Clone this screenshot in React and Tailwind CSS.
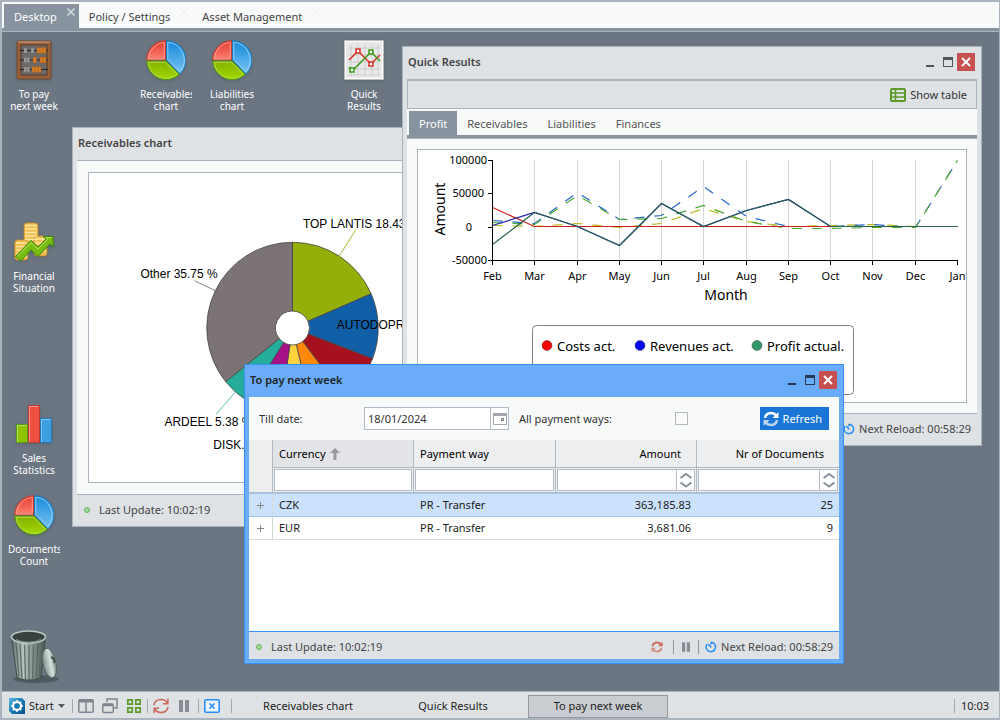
import React, { useState } from 'react';

const PIE_SLICES = [
  { start: 0, end: 66.5, color: '#94ae0a' },
  { start: 66.5, end: 111, color: '#115fa6' },
  { start: 111, end: 143, color: '#a61120' },
  { start: 143, end: 167, color: '#ff8809' },
  { start: 167, end: 188.5, color: '#ffd13e' },
  { start: 188.5, end: 211.7, color: '#a61187' },
  { start: 211.7, end: 231.3, color: '#24ad9a' },
  { start: 231.3, end: 360, color: '#7c7474' },
];

const MONTHS = [
  { name: 'Feb', x: 492.5 },
  { name: 'Mar', x: 534.5 },
  { name: 'Apr', x: 577.5 },
  { name: 'May', x: 619.5 },
  { name: 'Jun', x: 661.5 },
  { name: 'Jul', x: 703.5 },
  { name: 'Aug', x: 746.5 },
  { name: 'Sep', x: 788.5 },
  { name: 'Oct', x: 830.5 },
  { name: 'Nov', x: 872.5 },
  { name: 'Dec', x: 915.5 },
  { name: 'Jan', x: 957.5 },
];

const AMOUNTS = [
  { label: '100000', y: 160.5 },
  { label: '50000', y: 193.5 },
  { label: '0', y: 227.5 },
  { label: '-50000', y: 260.5 },
];

const SERIES = [
  { color: '#b9b71c', dashed: true, values: [225, 226, 223, 227, 223, 208, 221, 226, 225, 224, 226, 226] },
  { color: '#2a66c8', dashed: true, values: [220, 223, 192, 219, 215, 186, 216, 226, 226, 224, 227, 160] },
  { color: '#4aa832', dashed: true, values: [222, 224, 195, 219, 218, 205, 221, 228, 228, 227, 227, 160] },
  { color: '#d02020', dashed: false, values: [207, 226, 226, 226, 226, 226, 226, 226, 226, 226, 226, 226] },
  { color: '#2222c0', dashed: false, values: [225, 212, 226, 245, 203, 226, 210, 199, 226, 226, 226, 226] },
  { color: '#2b6350', dashed: false, values: [244, 212, 226, 245, 203, 226, 210, 199, 226, 226, 226, 226] },
];

const LEGEND = [
  { label: 'Costs act.', color: '#ff0000', x: 547 },
  { label: 'Revenues act.', color: '#0000ff', x: 640 },
  { label: 'Profit actual.', color: '#339966', x: 757 },
];

const PAYMENTS = [
  { currency: 'CZK', way: 'PR - Transfer', amount: '363,185.83', documents: 25 },
  { currency: 'EUR', way: 'PR - Transfer', amount: '3,681.06', documents: 9 },
];

function slicePath({ start, end }) {
  const point = (radius, angle) => {
    const rad = (angle * Math.PI) / 180;
    return `${292.5 + radius * Math.sin(rad)} ${328.5 - radius * Math.cos(rad)}`;
  };
  return `M${point(17, start)} L${point(86, start)} A86 86 0 0 1 ${point(86, end)} L${point(17, end)} A17 17 0 0 0 ${point(17, start)}Z`;
}

/* ---------- icons ---------- */

function RefreshIcon({ className }) {
  return (
    <svg className={className} viewBox="0 0 16 16" fill="none" stroke="currentColor" strokeWidth="2.500">
      <path d="M2 7C2.600 3.800 5 2 8 2c2.300 0 4 .9 5.300 2.700" />
      <path d="M15.500 1v6H9.500z" fill="currentColor" stroke="none" />
      <g className="opacity-70">
        <path d="M14 9c-.6 3.200-3 5-6 5-2.300 0-4-.9-5.300-2.700" />
        <path d="M.5 15V9h6z" fill="currentColor" stroke="none" />
      </g>
    </svg>
  );
}

function ThinRefreshIcon() {
  return (
    <svg className="h-4 w-4" viewBox="0 0 16 16" fill="none" stroke="#cd6a5c" strokeWidth="1.500">
      <path d="M1 7C1.600 3.500 4.500 1.500 8 1.500c2.800 0 5 1.300 6.300 3.500M14.900.8v5H10" />
      <path d="M15 9c-.6 3.500-3.500 5.500-7 5.500-2.800 0-5-1.300-6.300-3.500M1.100 15.200v-5H6" />
    </svg>
  );
}

function PauseIcon({ className }) {
  return (
    <svg className={className} viewBox="0 0 10 12" fill="#878d96">
      <path d="M0 0h4v12H0zM6 0h4v12H6z" />
    </svg>
  );
}

function TimerIcon() {
  return (
    <svg className="h-3 w-3" viewBox="0 0 12 12" fill="none" stroke="#2b8ff2" strokeWidth="1.500">
      <path d="M6 1.300a4.700 4.700 0 1 1-3.700 1.600M6 1v2.500M3.500 3.200 6.300 6.600" />
    </svg>
  );
}

function PieIcon() {
  return (
    <svg className="h-10 w-10 drop-shadow" viewBox="0 0 40 40">
      <defs>
        <linearGradient id="pieBlue" x1="0" y1="0" x2="0" y2="1">
          <stop offset="0" stopColor="#1489d8" />
          <stop offset="1" stopColor="#79c4f4" />
        </linearGradient>
        <linearGradient id="pieRed" x1="0" y1="0" x2="0" y2="1">
          <stop offset="0" stopColor="#e03c30" />
          <stop offset="1" stopColor="#ff8070" />
        </linearGradient>
        <linearGradient id="pieGreen" x1="0" y1="0" x2="0" y2="1">
          <stop offset="0" stopColor="#83b000" />
          <stop offset="1" stopColor="#a2d800" />
        </linearGradient>
      </defs>
      <path d="M20.500 20V.700A19.300 19.300 0 0 1 34 34z" fill="url(#pieBlue)" stroke="#1878bd" />
      <path d="M19.500 20V.700A19.300 19.300 0 0 0 .700 20z" fill="url(#pieRed)" stroke="#c53a30" />
      <path d="M.700 21H20l13.300 13.300A19.300 19.300 0 0 1 .700 21z" fill="url(#pieGreen)" stroke="#4f9a0c" />
      <path d="M21.800 19.500V2.200A18 18 0 0 1 33.900 31.700z" fill="none" stroke="#9bd2f7" strokeWidth=".9" />
      <path d="M18.300 18.800V2.200A18 18 0 0 0 2.200 18.800z" fill="none" stroke="#ff9f92" strokeWidth=".9" />
      <path d="M2.200 22.300H19.500l11.900 12A18 18 0 0 1 2.200 22.300z" fill="none" stroke="#b9e052" strokeWidth=".9" />
    </svg>
  );
}

function AbacusIcon() {
  return (
    <svg className="h-10 w-10 drop-shadow" viewBox="0 0 40 40">
      <rect x="3" y="1" width="34" height="38" rx="1" fill="#96603d" stroke="#74482c" />
      <path d="M4 2h32" stroke="#d0a68a" />
      <rect x="7" y="5" width="26" height="30" fill="#6b6a6b" stroke="#5a3823" />
      <path d="M6 10.500h28M6 20h28M6 29.500h28" stroke="#2a2422" strokeWidth="1.200" />
      <g fill="#9a9894">
        <rect x="10" y="8" width="3" height="5" rx="1" />
        <rect x="17" y="8" width="3" height="5" rx="1" />
        <rect x="10" y="17.500" width="2.500" height="5" rx="1" />
        <rect x="13" y="17.500" width="2.500" height="5" rx="1" />
        <rect x="10" y="27" width="2.500" height="5" rx="1" />
        <rect x="13" y="27" width="2.500" height="5" rx="1" />
      </g>
      <g fill="#d9822b" stroke="#9c5312" strokeWidth=".5">
        <rect x="23" y="7.500" width="3" height="6" rx="1" />
        <rect x="26" y="7.500" width="3" height="6" rx="1" />
        <rect x="29" y="7.500" width="3" height="6" rx="1" />
        <rect x="19" y="17" width="3.500" height="6" rx="1" />
        <rect x="26" y="17" width="3" height="6" rx="1" />
        <rect x="29" y="17" width="3" height="6" rx="1" />
        <rect x="18" y="26.500" width="3" height="6" rx="1" />
        <rect x="21" y="26.500" width="3" height="6" rx="1" />
        <rect x="24" y="26.500" width="3" height="6" rx="1" />
      </g>
    </svg>
  );
}

function ResultsIcon() {
  return (
    <svg className="h-10 w-10 drop-shadow" viewBox="0 0 40 40" fill="none">
      <rect x=".5" y=".5" width="39" height="39" fill="#e9e9e9" stroke="#b9babb" />
      <rect x="1.500" y="1.500" width="37" height="37" stroke="#fff" />
      <path d="M4 8h32M4 15h32M4 22h32M4 29h32M4 35h32M7 4v32M14 4v32M21 4v32M28 4v32M34 4v32" stroke="#cdcdcd" />
      <path d="m5 20 9-9 13 13 9-9" stroke="#d9302a" strokeWidth="1.500" />
      <path d="m5 27 3 4 19-19 9 9" stroke="#3f9a1c" strokeWidth="1.500" />
      <g fill="#fff" strokeWidth="1.500">
        <path d="M12 9h4v4h-4zM25 22h4v4h-4z" stroke="#d9302a" />
        <path d="M6 28h4v4H6zM25 10h4v4h-4z" stroke="#3f9a1c" />
      </g>
    </svg>
  );
}

function CoinsIcon() {
  return (
    <svg className="h-10 w-10 drop-shadow" viewBox="0 0 40 40">
      <g fill="#f2bd51" stroke="#c98a2a" strokeWidth=".8">
        <rect x="10" y="1" width="14" height="22" rx="3" />
        <rect x="20" y="14" width="13" height="20" rx="3" />
        <rect x=".8" y="18" width="13" height="20" rx="3" />
      </g>
      <g stroke="#fbe6a0" strokeWidth="1.600">
        <path d="M11 3.500h12M11 7h12M11 10.500h12M11 14h12M11 17.500h12M21 17h11M21 21h11M21 25h11M21 29h11M2 21h11M2 24.500h11M2 28h11M2 31.500h11M2 35h11" />
      </g>
      <path d="m1.500 34.500 15.500-16 7 6.500 8-8-3-2.500h10.200V25l-3.200-3L24 34.500l-7-6.500-10 11z" fill="#78bd13" stroke="#3c8209" />
      <path d="m3.500 34.500 13.500-14 7 6.500 9.500-9.500-1.500-2h6" fill="none" stroke="#b5e254" />
    </svg>
  );
}

function BarsIcon() {
  return (
    <svg className="h-10 w-10 drop-shadow" viewBox="0 0 40 40">
      <rect x="2.500" y="20.500" width="11" height="18" fill="#8ec302" stroke="#559c0c" />
      <rect x="14.500" y="1.500" width="11" height="37" fill="#ee5142" stroke="#bd3a30" />
      <rect x="26.500" y="14.500" width="11" height="24" fill="#3d9fe0" stroke="#1d79b7" />
      <path d="M3.500 38V21.500h9M15.500 38V2.500h9M27.500 38V15.500h9" fill="none" stroke="#fff" strokeOpacity=".4" />
    </svg>
  );
}

function TrashIcon() {
  return (
    <svg className="h-14 w-13" viewBox="0 0 52 56">
      <defs>
        <linearGradient id="can" x1="0" x2="1">
          <stop offset="0" stopColor="#64726e" />
          <stop offset=".35" stopColor="#b5c4bf" />
          <stop offset="1" stopColor="#485450" />
        </linearGradient>
        <linearGradient id="canLid" x1="0" x2="1">
          <stop offset="0" stopColor="#7f918c" />
          <stop offset=".6" stopColor="#d3e0dc" />
          <stop offset="1" stopColor="#78857f" />
        </linearGradient>
      </defs>
      <ellipse cx="27" cy="50" rx="23" ry="4" fill="#343b42" opacity=".5" />
      <path d="M2.500 8h34L32 48c-3 4-21 4-24 0z" fill="url(#can)" stroke="#414c49" />
      <path d="m7 14 3 34M11 15l2 35M15.500 16l1 35M20 16v35M24.500 16l-1 35M29 15l-2 35M33 14l-3 34" stroke="#5b6863" strokeWidth="1.200" />
      <ellipse cx="19.500" cy="8" rx="17" ry="6" fill="#37413f" stroke="#b8c7c2" strokeWidth="1.600" />
      <path d="M7 10c6 4 19 4 25 0" stroke="#77847f" fill="none" />
      <ellipse cx="40.500" cy="34" rx="6.500" ry="15" transform="rotate(-11 40.500 34)" fill="url(#canLid)" stroke="#57635f" />
      <path d="M42 28c3 1 4 4 3 6" fill="none" stroke="#3e4946" strokeWidth="2" />
    </svg>
  );
}

/* ---------- windows ---------- */

function WindowControls() {
  return (
    <div className="flex items-center">
      <button aria-label="Minimize" className="flex h-4.5 w-4.5 items-center justify-center">
        <svg className="h-3 w-3" viewBox="0 0 12 12" fill="currentColor">
          <path d="M2 9h8v2H2z" />
        </svg>
      </button>
      <button aria-label="Maximize" className="flex h-4.5 w-4.5 items-center justify-center">
        <svg className="h-3 w-3" viewBox="0 0 12 12" fill="currentColor" fillRule="evenodd">
          <path d="M1 1h10v10H1zM2 4v6h8V4z" />
        </svg>
      </button>
      <button aria-label="Close" className="flex h-4.5 w-4.5 items-center justify-center bg-[#c75050]">
        <svg className="h-3 w-3" viewBox="0 0 12 12" stroke="#fff" strokeWidth="2">
          <path d="m2 2 8 8M10 2l-8 8" />
        </svg>
      </button>
    </div>
  );
}

function StatusBar({ active }) {
  return (
    <footer
      className={`flex h-7 shrink-0 items-center border-t bg-[#dfe2e5] px-1.5 pt-0.5 text-[#444] ${
        active ? 'border-[#3892f3]' : 'border-[#a9b4be]'
      }`}
    >
      <span className="mx-px h-1.5 w-1.5 rounded-full border border-[#5fb257] bg-[#a5dd9c]" />
      <span className="ml-2">Last Update: 10:02:19</span>
      <div className="ml-auto flex items-center">
        <button aria-label="Reload" className="mr-2.5">
          <RefreshIcon className="h-3 w-3 text-[#cd6a5c]" />
        </button>
        <span className="mr-2 h-3.5 w-px bg-[#8e99a4]" />
        <button aria-label="Pause" className="mr-2">
          <PauseIcon className="h-2.5 w-2" />
        </button>
        <span className="mr-1.5 h-3.5 w-px bg-[#8e99a4]" />
        <TimerIcon />
        <span className="ml-1">Next Reload: 00:58:29</span>
      </div>
    </footer>
  );
}

function DesktopWindow({ title, active, className, children }) {
  return (
    <section
      className={`absolute flex flex-col border px-1 pb-1 ${
        active ? 'border-[#3892f3] bg-[#6aacf8]' : 'border-[#a9b4be] bg-[#dfe2e5]'
      } ${className}`}
    >
      <header className={`flex h-8 shrink-0 items-center justify-between pb-0.5 pl-px pr-0.5 ${active ? 'text-[#263c56]' : 'text-[#555]'}`}>
        <h2 className={`font-semibold ${active ? 'text-[#222]' : 'text-[#444]'}`}>{title}</h2>
        <WindowControls />
      </header>
      {children}
      <StatusBar active={active} />
    </section>
  );
}

function ReceivablesWindow() {
  return (
    <DesktopWindow title="Receivables chart" className="left-[70px] top-[95px] h-[400px] w-[440px]">
      <div className="min-h-0 flex-1 border-t border-[#a9b4be] bg-[#f8faf9] p-[11px]">
        <div className="h-full border border-[#a9b4be] bg-white">
          <svg className="h-full w-full" viewBox="89 173 406 310" fontFamily="'Liberation Sans', sans-serif" fontSize="12">
            {PIE_SLICES.map((slice) => (
              <path key={slice.color} d={slicePath(slice)} fill={slice.color} stroke="#444" strokeOpacity=".8" />
            ))}
            <path d="m356 230-17 27" stroke="#a4bb30" />
            <path d="m194 281 21 10" stroke="#8c8585" />
            <path d="m216 415 19-22" stroke="#4fbfaf" />
            <text x="303" y="228">TOP LANTIS 18.43 %</text>
            <text x="337" y="330">AUTODOPR</text>
            <text x="140" y="278">Other 35.75 %</text>
            <text x="164" y="427">ARDEEL 5.38 %</text>
            <text x="213" y="450">DISK...</text>
          </svg>
        </div>
      </div>
    </DesktopWindow>
  );
}

function ProfitChart() {
  return (
    <svg className="h-full w-full" viewBox="418 150 548 252" fill="none">
      {MONTHS.slice(1, -1).map((month) => (
        <path key={month.name} d={`M${month.x} 160V260`} stroke="#d8d8d8" />
      ))}
      {SERIES.map((line) => (
        <polyline
          key={line.color}
          points={line.values.map((y, i) => `${MONTHS[i].x},${y + 0.5}`).join(' ')}
          stroke={line.color}
          strokeWidth="1.200"
          strokeDasharray={line.dashed ? '10 10' : undefined}
        />
      ))}
      <path d="M492.500 160V260.500H958" stroke="#000" />
      <g fill="#000" fontSize="11">
        {AMOUNTS.map((amount) => (
          <g key={amount.label}>
            <path d={`M488 ${amount.y}h4`} stroke="#000" />
            <text x={amount.label === '0' ? 472 : amount.label === '50000' ? 484 : 487} y={amount.y + 3.5} textAnchor="end">
              {amount.label}
            </text>
          </g>
        ))}
        {MONTHS.map((month) => (
          <g key={month.name}>
            <path d={`M${month.x} 260v5`} stroke="#000" />
            <text x={month.x} y="280" textAnchor="middle">{month.name}</text>
          </g>
        ))}
      </g>
      <g fill="#000" fontSize="14">
        <text x="726" y="300" textAnchor="middle">Month</text>
        <text transform="translate(445 209) rotate(-90)" textAnchor="middle">Amount</text>
      </g>
      <rect x="532.500" y="325.500" width="321" height="69" rx="4" stroke="#808080" />
      <g fontSize="13">
        {LEGEND.map((item) => (
          <g key={item.label}>
            <circle cx={item.x} cy="345.500" r="5" fill={item.color} stroke="#444" strokeWidth=".5" />
            <text x={item.x + 10} y="351" fill="#000">{item.label}</text>
          </g>
        ))}
      </g>
    </svg>
  );
}

function QuickResultsWindow() {
  return (
    <DesktopWindow title="Quick Results" className="left-[400px] top-[14px] h-[400px] w-[580px]">
      <div className="flex h-[30px] shrink-0 items-center justify-end border border-t-2 border-[#a9b4be] pr-[9px]">
        <button className="flex items-center gap-1 text-[#333]">
          <svg className="h-4 w-4" viewBox="0 0 16 16" fill="none" stroke="#5e9a2b" strokeWidth="2">
            <rect x="1" y="2" width="14" height="12" rx="1" />
            <path d="M1 6h14M1 10h14M5.500 2v12" strokeWidth="1.600" />
          </svg>
          Show table
        </button>
      </div>
      <nav className="flex shrink-0 border-b-3 border-[#87939f] bg-[#f8faf9] px-0.5 pt-0.5 text-[#555]">
        <button className="h-6 bg-[#87939f] px-2.5 pt-0.5 text-white">Profit</button>
        <button className="h-6 px-2.5 pt-0.5">Receivables</button>
        <button className="h-6 px-2.5 pt-0.5">Liabilities</button>
        <button className="h-6 px-2.5 pt-0.5">Finances</button>
      </nav>
      <div className="min-h-0 flex-1 border-t border-[#a9b4be] bg-[#f8faf9] p-2.5">
        <div className="h-full border border-[#a9b4be] bg-white">
          <ProfitChart />
        </div>
      </div>
    </DesktopWindow>
  );
}

function FilterCell({ label, numeric }) {
  return (
    <th className="border-l border-[#b3b9c1] p-px">
      <div className="flex h-[22px] border border-[#b3b9c8] bg-white">
        <input aria-label={label} className="h-full w-full min-w-0 px-1 font-normal outline-none" />
        {numeric && (
          <button aria-label={`Step ${label}`} className="flex h-full w-4.5 shrink-0 items-center justify-center border-l border-[#b3b9c8]">
            <svg className="h-4 w-3.5" viewBox="0 0 14 16" fill="none" stroke="#87909a" strokeWidth="2">
              <path d="m1.500 6 5.500-4 5.500 4M1.500 10.500l5.500 4 5.500-4" />
            </svg>
          </button>
        )}
      </div>
    </th>
  );
}

function ToPayWindow() {
  const [date, setDate] = useState('18/01/2024');

  return (
    <DesktopWindow title="To pay next week" active className="left-[242px] top-[332px] h-[300px] w-[600px]">
      <form className="flex h-[43px] shrink-0 items-center bg-[#f8faf9] px-2.5 text-[#333]" onSubmit={(e) => e.preventDefault()}>
        <label htmlFor="tillDate" className="w-[105px]">Till date:</label>
        <div className="flex h-[23px] w-[145px] border border-[#b3b9c8] bg-white">
          <input
            id="tillDate"
            value={date}
            onChange={(e) => setDate(e.target.value)}
            className="w-full min-w-0 px-[3px] outline-none"
          />
          <button type="button" aria-label="Pick date" className="flex w-[18px] shrink-0 items-center justify-center border-l border-[#b3b9c8]">
            <svg className="h-3 w-3.5" viewBox="0 0 14 12" fill="none" stroke="#a2a5aa">
              <path d="M.5.500h13v11H.5z" />
              <path d="M0 1.500h14" strokeWidth="3" />
              <path d="M8.500 5.500h2v2h-2z" stroke="#67707a" />
            </svg>
          </button>
        </div>
        <label htmlFor="allWays" className="ml-2.5 w-[156px]">All payment ways:</label>
        <input id="allWays" type="checkbox" className="h-[13px] w-[13px] appearance-none border border-[#b3b9c1] bg-[#fbfbfb]" />
        <button className="ml-auto flex h-[23px] items-center gap-1 bg-[#1a75d6] pl-[3px] pr-[7px] text-white">
          <RefreshIcon className="h-4 w-4" />
          Refresh
        </button>
      </form>

      <div className="min-h-0 flex-1 bg-white">
        <table className="w-full table-fixed border-separate border-spacing-0 text-[#222]">
          <colgroup>
            <col className="w-[23px]" />
            <col className="w-[141px]" />
            <col className="w-[142px]" />
            <col className="w-[141px]" />
            <col />
          </colgroup>
          <thead className="bg-[#edeef0] text-black">
            <tr className="h-7 [&>th]:border-b [&>th]:border-[#b3b9c1] [&>th]:font-normal">
              <th rowSpan={2} aria-label="Expand" />
              <th className="border-l bg-[#e3e4e8] px-1.5 text-left">
                <span className="flex items-center gap-1">
                  Currency
                  <svg className="h-3 w-2.5" viewBox="0 0 10 12" fill="#999">
                    <path d="m5 0 5 5H6.500v7h-3V5H0z" />
                  </svg>
                </span>
              </th>
              <th className="border-l px-1.5 text-left">Payment way</th>
              <th className="border-l px-[15px] text-right">Amount</th>
              <th className="border-l px-[15px] text-right">Nr of Documents</th>
            </tr>
            <tr className="[&>th]:border-b [&>th]:border-b-[#b3b9c1]">
              <FilterCell label="Currency" />
              <FilterCell label="Payment way" />
              <FilterCell label="Amount" numeric />
              <FilterCell label="Nr of Documents" numeric />
            </tr>
          </thead>
          <tbody>
            {PAYMENTS.map((row, index) => (
              <tr
                key={row.currency}
                className={
                  index === 0
                    ? 'h-6 bg-[#cbe1fc] [&>td]:border-b [&>td]:border-t [&>td]:border-y-[#9cc8f3]'
                    : 'h-[23px] [&>td]:border-b [&>td]:border-b-[#dcdfe2]'
                }
              >
                <td>
                  <button aria-label={`Expand ${row.currency}`} className="flex w-full items-center justify-center">
                    <svg className="h-[7px] w-[7px]" viewBox="0 0 7 7" stroke="#888">
                      <path d="M3.500 0v7M0 3.500h7" />
                    </svg>
                  </button>
                </td>
                <td className="border-l border-l-[#d3d8dd] px-1.5">{row.currency}</td>
                <td className="px-[7px]">{row.way}</td>
                <td className="px-[5px] text-right">{row.amount}</td>
                <td className="px-1.5 text-right">{row.documents}</td>
              </tr>
            ))}
          </tbody>
        </table>
      </div>
    </DesktopWindow>
  );
}

/* ---------- desktop ---------- */

function Shortcut({ icon, lines, className }) {
  return (
    <button className={`flex flex-col items-center gap-2 self-start pr-0.5 text-[10px] leading-3 text-white ${className}`}>
      {icon}
      <span className="w-[52px] overflow-hidden whitespace-nowrap">
        {lines.map((line) => (
          <span key={line} className="block">{line}</span>
        ))}
      </span>
    </button>
  );
}

function TopTab({ label, selected }) {
  return (
    <div className={`relative flex h-6 items-center pl-2.5 pr-[22px] pt-0.5 ${selected ? 'bg-[#87939f] text-white' : 'text-[#444]'}`}>
      <button>{label}</button>
      <button aria-label={`Close ${label}`} className="absolute right-1 top-1">
        <svg className="h-2 w-2" viewBox="0 0 8 8" stroke={selected ? '#d5dadf' : '#f0f1f1'} strokeWidth="1.500">
          <path d="m.5.500 7 7M7.500.500l-7 7" />
        </svg>
      </button>
    </div>
  );
}

function Separator() {
  return <span className="h-3.5 w-px shrink-0 bg-[#a0a9b2]" />;
}

function Taskbar() {
  return (
    <footer className="flex h-[27px] shrink-0 items-center border-t border-[#a9b4be] bg-[#dfe2e5] pt-0.5 text-[#222]">
      <button className="flex w-[70px] items-center gap-1 pl-[7px]">
        <svg className="h-4 w-4" viewBox="0 0 16 16">
          <defs>
            <linearGradient id="startBg" x1="0" y1="0" x2="1" y2="1">
              <stop offset="0" stopColor="#5cbbe0" />
              <stop offset=".5" stopColor="#1879b4" />
              <stop offset="1" stopColor="#0b4e86" />
            </linearGradient>
          </defs>
          <path d="M0 0h13l3 3v13H3l-3-3z" fill="url(#startBg)" />
          <circle cx="8" cy="8" r="4" fill="none" stroke="#fff" strokeWidth="2.200" />
          <path d="M8 2v12M2 8h12M3.800 3.800l8.400 8.400M12.200 3.800l-8.400 8.400" stroke="#fff" strokeWidth="1.500" />
          <circle cx="8" cy="8" r="2.800" fill="#1879b4" />
        </svg>
        Start
        <svg className="h-1 w-2" viewBox="0 0 8 4" fill="#555">
          <path d="M0 0h7L3.500 4z" />
        </svg>
      </button>
      <Separator />
      <div className="flex w-[74px] items-center justify-center gap-2">
        <button aria-label="Tile windows">
          <svg className="h-4 w-4" viewBox="0 0 16 16" fill="none" stroke="#80868f" strokeWidth="1.500">
            <rect x=".8" y="1.800" width="14.400" height="12.400" rx="1" />
            <path d="M1 3h14" strokeWidth="3" />
            <path d="M8 2v12" />
          </svg>
        </button>
        <button aria-label="Cascade windows">
          <svg className="h-4 w-4" viewBox="0 0 16 16" fill="none" stroke="#80868f" strokeWidth="1.500">
            <path d="M5 4V1h10v9h-3" />
            <rect x=".8" y="6" width="10.400" height="8.500" rx="1" />
            <path d="M1 7h10" strokeWidth="2.500" />
          </svg>
        </button>
        <button aria-label="Show grid">
          <svg className="h-4 w-4" viewBox="0 0 16 16" fill="none" stroke="#5e9a2b" strokeWidth="1.700">
            <path d="M1.800 1.800h4.400v4.400H1.800zM9.800 1.800h4.400v4.400H9.800zM1.800 9.800h4.400v4.400H1.800zM9.800 9.800h4.400v4.400H9.800z" />
          </svg>
        </button>
      </div>
      <Separator />
      <div className="flex w-[50px] items-center gap-2.5 pl-[5px]">
        <button aria-label="Reload all">
          <ThinRefreshIcon />
        </button>
        <button aria-label="Pause all">
          <PauseIcon className="h-3 w-2.5" />
        </button>
      </div>
      <Separator />
      <div className="flex w-8 items-center pl-[5px]">
        <button aria-label="Close all">
          <svg className="h-4 w-4" viewBox="0 0 16 16" fill="none" stroke="#2b8ff2" strokeWidth="1.600">
            <rect x=".8" y="1.800" width="14.400" height="12.400" rx="1" fill="#eaf4ff" />
            <path d="m5.500 5.500 5 5M10.500 5.500l-5 5" />
          </svg>
        </button>
      </div>
      <Separator />
      <div className="ml-1.5 flex gap-[5px]">
        <button className="h-[23px] w-[140px] border border-transparent">Receivables chart</button>
        <button className="h-[23px] w-[140px] border border-transparent">Quick Results</button>
        <button className="h-[23px] w-[140px] border border-[#999] bg-[#c9cdd1]">To pay next week</button>
      </div>
      <div className="ml-auto flex items-center gap-1.5 pr-2.5">
        <Separator />
        <span>10:03</span>
      </div>
    </footer>
  );
}

function App() {
  return (
    <div className="flex h-screen flex-col overflow-hidden border-2 border-r border-[#a9b4be] font-['Noto_Sans',sans-serif] text-[11px] leading-4">
      <nav className="flex shrink-0 border-b-3 border-[#87939f] bg-[#f9fbfa] pl-0.5 pt-0.5">
        <TopTab label="Desktop" selected />
        <TopTab label="Policy / Settings" />
        <TopTab label="Asset Management" />
      </nav>

      <main className="relative flex min-h-0 flex-1 flex-col justify-between border-t border-[#a9b4be] bg-[#6b7682]">
        <div className="grid grid-cols-[repeat(6,66px)] grid-rows-[repeat(6,91px)] pt-2">
          <Shortcut icon={<AbacusIcon />} lines={['To pay', 'next week']} className="col-start-1 row-start-1" />
          <Shortcut icon={<PieIcon />} lines={['Receivables', 'chart']} className="col-start-3 row-start-1" />
          <Shortcut icon={<PieIcon />} lines={['Liabilities', 'chart']} className="col-start-4 row-start-1" />
          <Shortcut icon={<ResultsIcon />} lines={['Quick', 'Results']} className="col-start-6 row-start-1" />
          <Shortcut icon={<CoinsIcon />} lines={['Financial', 'Situation']} className="col-start-1 row-start-3" />
          <Shortcut icon={<BarsIcon />} lines={['Sales', 'Statistics']} className="col-start-1 row-start-5" />
          <Shortcut icon={<PieIcon />} lines={['Documents', 'Count']} className="col-start-1 row-start-6" />
        </div>
        <button aria-label="Trash" className="mb-1.5 ml-[7px] self-start">
          <TrashIcon />
        </button>

        <ReceivablesWindow />
        <QuickResultsWindow />
        <ToPayWindow />
      </main>

      <Taskbar />
    </div>
  );
}

export default App;
